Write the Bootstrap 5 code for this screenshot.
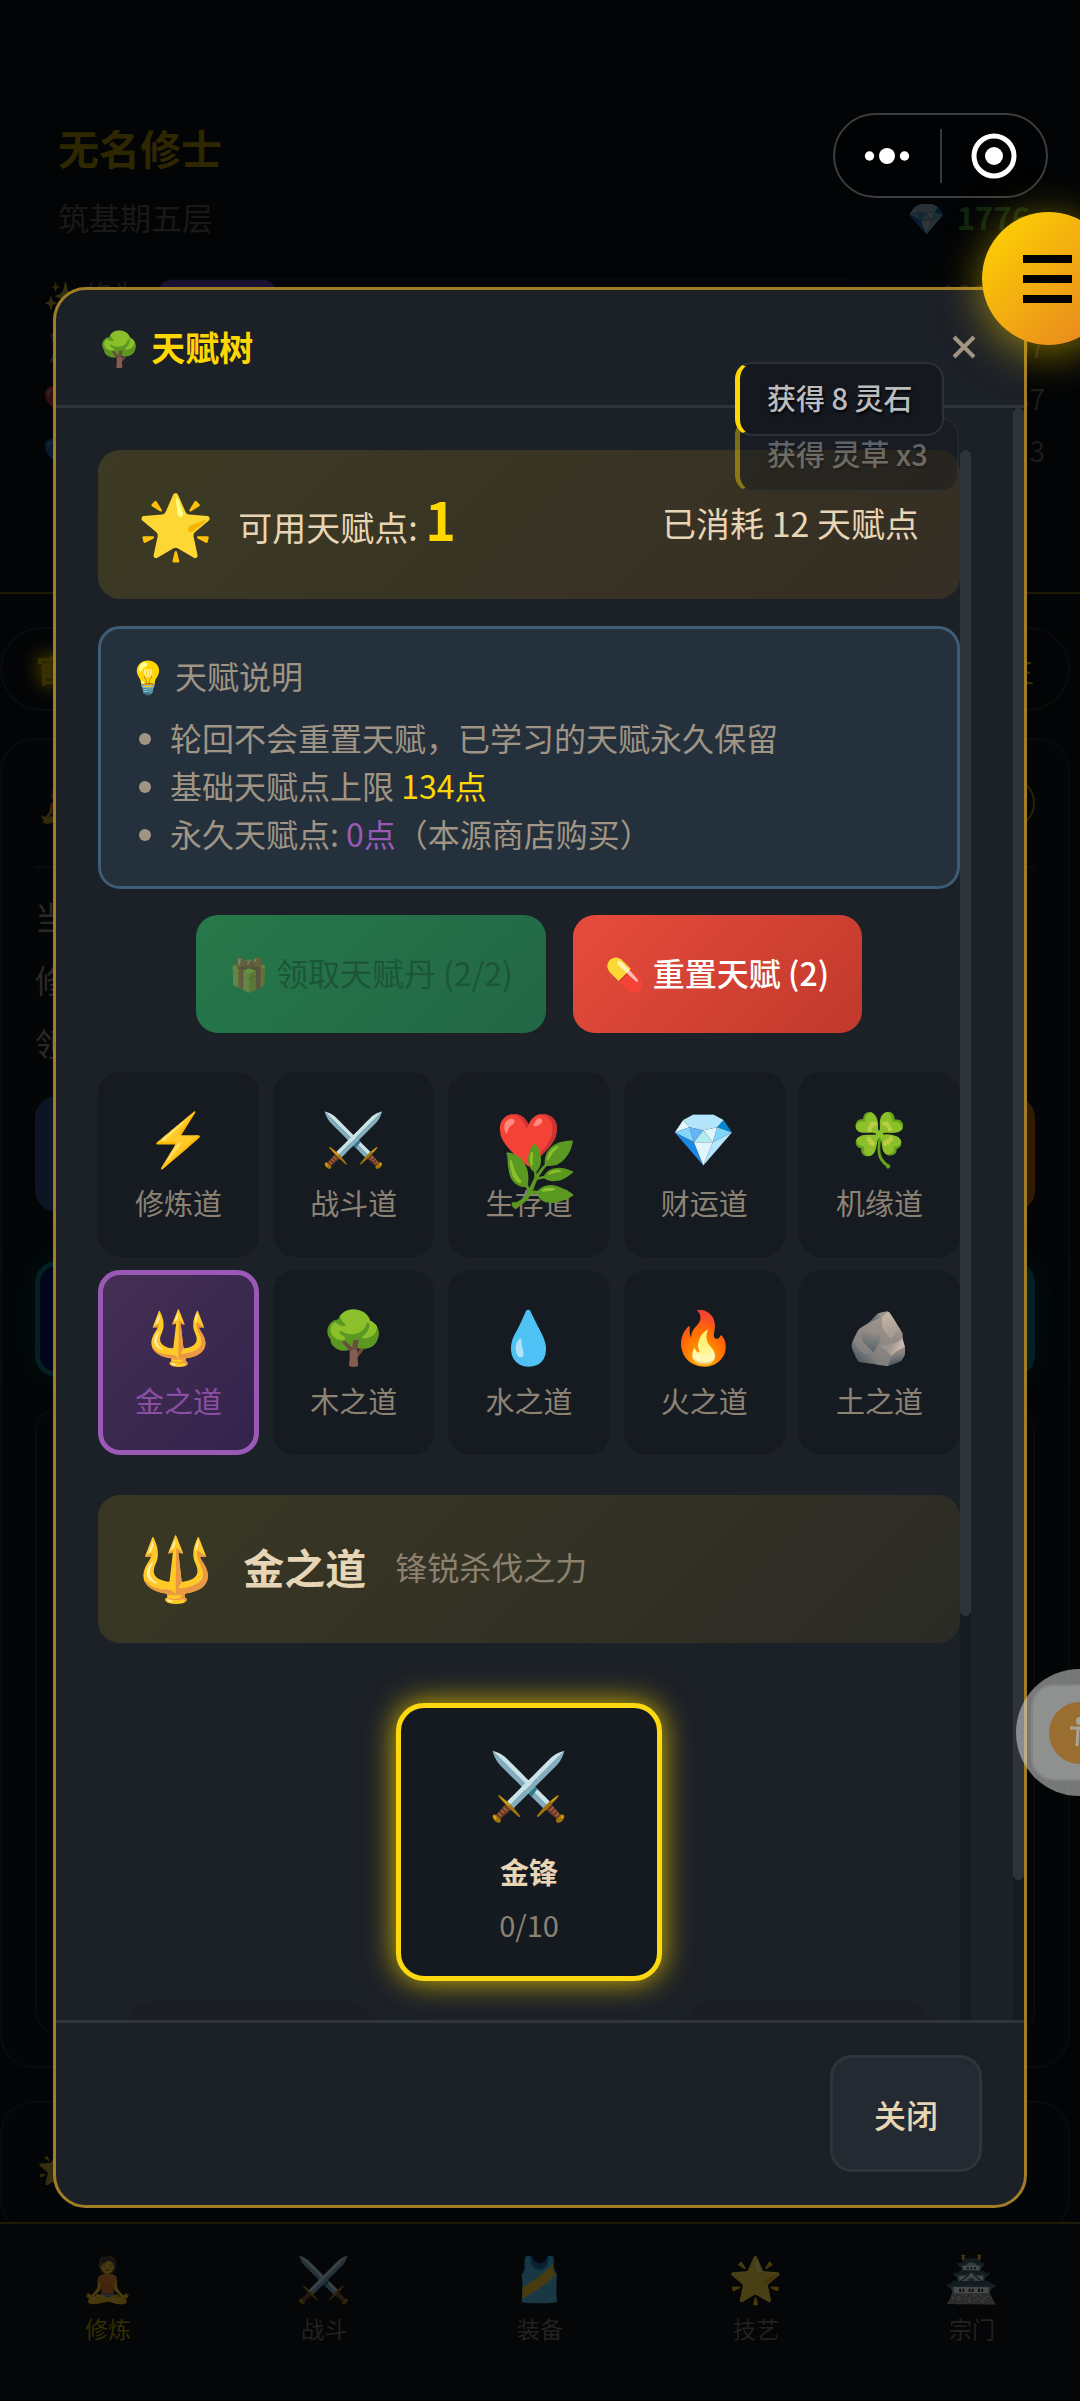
<!DOCTYPE html>
<html lang="zh-CN">
<head>
<meta charset="utf-8">
<meta name="viewport" content="width=device-width, initial-scale=1">
<title>天赋树</title>
<link href="https://cdn.jsdelivr.net/npm/bootstrap@5.3.0/dist/css/bootstrap.min.css" rel="stylesheet">
<style>
  :root { --gold: #ffd700; --ink: #e8d5b5; --muted: #968a79; --panel: #1c2027; --deep: #161b21; --line: #2f343b; }
  body { background: #020406; color: var(--ink); font-family: "Noto Sans CJK SC", "Noto Color Emoji", sans-serif; font-size: 32px; line-height: 48px; }
  button { font-family: inherit; color: inherit; }
  .game-screen { height: 100vh; position: relative; }

  /* dimmed page below the dialog */
  .hero-bar { height: 594px; padding: 117px 35px 0 43px; border-bottom: 2px solid #201a05; }
  .hero-name { font-size: 41px; line-height: 60px; color: #2f2700; padding-left: 15px; }
  .hero-sub { height: 66px; color: #1b1916; font-size: 31px; padding: 16px 15px 0; }
  .hero-gems { color: #0f2410; font-weight: 700; }
  .dim-emoji { opacity: .2; }
  .stat-list { padding-top: 25px; }
  .stat-line { height: 52px; line-height: 52px; font-size: 28px; color: #1c1b1a; }
  .stat-name { width: 113px; white-space: nowrap; }
  .stat-track { height: 32px; border: 2px solid #07080f; border-radius: 16px; }
  .stat-fill { height: 28px; border-radius: 14px; background: #1b1130; }
  .stat-num { width: 185px; text-align: right; }
  .page-area { padding: 33px 10px 0 0; flex: 1 1 0; min-height: 0; }
  .chip-row { height: 84px; border: 2px solid #0a0b0c; border-radius: 42px; padding: 0 34px; color: #3a3000; font-size: 31px; margin-bottom: 27px; }
  .chip-on { text-shadow: 0 0 20px #7a6500; font-weight: 700; }
  .dim-panel { border: 2px solid #090b0d; border-radius: 33px; background: #030506; padding: 0 33px; color: #2b2926; }
  .dim-panel-main { height: 1330px; margin-bottom: 33px; }
  .dim-head { height: 128px; padding-left: 2px; border-bottom: 2px solid #0a0c0e; }
  .dim-pill { width: 120px; height: 52px; border: 2px solid #2a2200; border-radius: 26px; }
  .dim-text { line-height: 63px; padding-top: 17px; margin-bottom: 22px; }
  .dim-act { height: 116px; border-radius: 22px; margin-bottom: 49px; background: linear-gradient(90deg, #0b1524, #331a02); }
  .dim-act-teal { border: 5px solid #042022; background: linear-gradient(90deg, #01041a, #022228); box-shadow: 0 0 30px #021416; }
  .dim-box { height: 626px; border: 2px solid #090b0d; border-radius: 22px; margin-top: -18px; }
  .tab-bar { height: 179px; border-top: 2px solid #201a08; background: #040608; padding-top: 22px; }
  .tab-link { color: #24211e; font-size: 23px; line-height: 34px; text-decoration: none; }
  .tab-link.on { color: #352d00; }
  .tab-icon { font-size: 44px; line-height: 60px; margin-bottom: 5px; opacity: .27; }

  /* dialog */
  .veil { position: absolute; inset: 0; padding: 287px 53px 0; }
  .talent-dialog { height: 80vh; border: 3px solid #a17d26; border-radius: 33px; background: var(--panel); overflow: hidden; }
  .dlg-head { height: 118px; padding: 0 42px 2px; border-bottom: 3px solid var(--line); }
  .dlg-title { font-size: 34px; line-height: 50px; font-weight: 700; color: var(--gold); gap: 11px; }
  .dlg-x { width: 36px; height: 40px; color: #a09484; }
  .dlg-foot { height: 185px; padding: 0 42px; border-top: 3px solid var(--line); }
  .foot-btn { height: 117px; padding: 0 41px; border: 3px solid #2f353d; border-radius: 22px; background: #242a32; font-weight: 500; }
  .outer-scroll { min-height: 0; }
  .outer-pane { padding: 42px 42px 0; }
  .inner-pane { min-height: 0; overflow: hidden; }
  .rail { width: 11px; flex: none; background: #161a21; }
  .rail-thumb { border-radius: 6px; background: #2f343c; }

  .points-card { height: 149px; border-radius: 22px; padding: 0 41px 4px 39px; font-size: 34px; background: linear-gradient(135deg, #3c3a24, #352e24); margin-bottom: 27px; }
  .points-left { gap: 24px; }
  .big-emoji { font-size: 62px; line-height: 86px; padding-bottom: 4px; }
  .points-value { font-size: 52px; color: var(--gold); }
  .note-card { border: 3px solid #3f5d76; border-radius: 22px; background: #24303c; color: #a09484; padding: 22px 27px 29px; margin-bottom: 26px; }
  .note-card p { margin-bottom: 14px; }
  .note-card ul { padding-left: 42px; }
  .act-btn { height: 118px; padding: 0 33px 4px; border: 0; border-radius: 22px; }
  .act-claim { background: linear-gradient(135deg, #26784a, #236746); color: #1c5539; }
  .act-claim .act-emoji { opacity: .3; }
  .act-reset { background: linear-gradient(135deg, #e74c3c, #c0392b); color: #fff; font-weight: 500; }
  .act-gap { gap: 27px; margin-bottom: 39px; }
  .path-grid { display: grid; grid-template-columns: repeat(5, 1fr); gap: 13px 14px; margin-bottom: 40px; }
  .path-btn { height: 185px; border: 5px solid var(--deep); border-radius: 22px; background: var(--deep); color: #8d8375; font-size: 29px; line-height: 43px; padding: 0; }
  .path-btn.on { border-color: #9b59b6; background: linear-gradient(135deg, #452f54, #33234c); color: #8a4fa3; }
  .path-emoji { font-size: 52px; line-height: 62px; margin-bottom: 14px; }
  .path-card { height: 148px; border-radius: 22px; padding: 0 39px 6px; background: linear-gradient(135deg, #3a3824, #2b2b26); margin-bottom: 60px; gap: 29px; }
  .path-name { font-size: 41px; line-height: 60px; }
  .path-desc { color: #8c816e; }
  .node-btn { width: 266px; height: 278px; border: 5px solid #fbd80f; border-radius: 28px; background: #151a21; box-shadow: 0 0 30px #d8b800; font-size: 29px; line-height: 44px; padding: 16px 0 0; margin-bottom: 20px; }
  .node-emoji { font-size: 65px; line-height: 52px; margin-bottom: 42px; }
  .node-rank { color: #8b8276; margin-top: 9px; }
  .next-row { padding: 0 29px; }
  .next-node { width: 246px; height: 278px; border: 0; border-radius: 28px; background: #1b1d22; }

  /* floating layers */
  .toasts { position: absolute; top: 362px; left: 735px; }
  .toast-line { height: 74px; border: 2px solid #2b3138; border-left: 5px solid var(--gold); border-radius: 17px; background: #15181f; color: #bbbcbf; font-size: 29px; font-weight: 500; line-height: 67px; padding: 0 29px 0 27px; width: max-content; text-shadow: 1px 2px 3px #000; }
  .toast-top { position: relative; z-index: 1; }
  .toast-old { opacity: .42; margin-top: -18px; }
  .herb { position: absolute; top: 1124px; left: 501px; font-size: 62px; line-height: 90px; }
  .capsule { position: absolute; top: 113px; right: 32px; width: 215px; height: 85px; border: 2px solid #3b3c3d; border-radius: 43px; background: #010203; }
  .capsule button { padding: 0; border: 0; background: none; }
  .capsule-rule { width: 2px; height: 54px; background: #38393a; }
  .menu-fab { position: absolute; top: 212px; right: -35px; width: 133px; height: 133px; border: 0; border-radius: 50%; background: linear-gradient(135deg, #ffd700, #e67e22); box-shadow: 0 8px 44px rgba(255, 215, 0, .5); padding: 0 0 0 41px; text-align: left; }
  .assist-ball { position: absolute; top: 1669px; right: -63px; width: 127px; height: 127px; border: 0; padding: 0; background: none; }
</style>
</head>
<body>
<div class="game-screen overflow-hidden d-flex flex-column">
  <header class="hero-bar flex-shrink-0">
    <h1 class="hero-name fw-bold m-0">无名修士</h1>
    <div class="hero-sub d-flex justify-content-between"><span>筑基期五层</span><span class="hero-gems"><span class="dim-emoji me-1">💎</span> 1776</span></div>
    <div class="stat-list">
      <div class="stat-line d-flex align-items-center"><span class="stat-name"><span class="dim-emoji">✨</span> 修为</span><div class="stat-track flex-grow-1"><div class="stat-fill" style="width:17%"></div></div><span class="stat-num">139/477</span></div>
      <div class="stat-line d-flex align-items-center"><span class="stat-name flex-grow-1"><span class="dim-emoji">⏳</span></span><span class="stat-num">107</span></div>
      <div class="stat-line d-flex align-items-center"><span class="stat-name flex-grow-1"><span class="dim-emoji">❤️</span></span><span class="stat-num">37</span></div>
      <div class="stat-line d-flex align-items-center"><span class="stat-name flex-grow-1"><span class="dim-emoji">💙</span></span><span class="stat-num">3</span></div>
    </div>
  </header>
  <main class="page-area overflow-hidden">
    <div class="chip-row d-flex align-items-center justify-content-between"><span class="chip-on">官</span><span>生</span></div>
    <section class="dim-panel dim-panel-main">
      <div class="dim-head d-flex align-items-center justify-content-between"><span class="dim-emoji">🧘</span><span class="dim-pill"></span></div>
      <div class="dim-text">当<br>修<br>领</div>
      <div class="dim-act"></div>
      <div class="dim-act dim-act-teal"></div>
      <div class="dim-box"></div>
    </section>
    <section class="dim-panel">
      <div class="dim-head d-flex align-items-center"><span class="dim-emoji">🌟</span></div>
    </section>
  </main>
  <nav class="tab-bar d-flex flex-shrink-0">
    <a href="#" class="tab-link on flex-fill text-center w-100"><div class="tab-icon">🧘</div>修炼</a>
    <a href="#" class="tab-link flex-fill text-center w-100"><div class="tab-icon">⚔️</div>战斗</a>
    <a href="#" class="tab-link flex-fill text-center w-100"><div class="tab-icon">🎽</div>装备</a>
    <a href="#" class="tab-link flex-fill text-center w-100"><div class="tab-icon">🌟</div>技艺</a>
    <a href="#" class="tab-link flex-fill text-center w-100"><div class="tab-icon">🏯</div>宗门</a>
  </nav>

  <div class="veil">
    <div class="talent-dialog d-flex flex-column" role="dialog" aria-labelledby="dlgTitle">
      <div class="dlg-head d-flex align-items-center justify-content-between flex-shrink-0">
        <h2 class="dlg-title d-flex m-0" id="dlgTitle"><span>🌳</span><span>天赋树</span></h2>
        <button type="button" class="dlg-x border-0 bg-transparent p-0 d-flex align-items-center justify-content-center" aria-label="关闭窗口">
          <svg width="24" height="24" viewBox="0 0 24 24" fill="none" stroke="currentColor" stroke-width="4"><path d="M2 2l20 20M22 2L2 22"/></svg>
        </button>
      </div>
      <div class="outer-scroll d-flex flex-grow-1">
        <div class="outer-pane d-flex flex-grow-1">
          <div class="inner-pane flex-grow-1">
            <div class="points-card d-flex align-items-center justify-content-between">
              <div class="points-left d-flex align-items-center">
                <span class="big-emoji">🌟</span>
                <span>可用天赋点: <b class="points-value">1</b></span>
              </div>
              <span>已消耗 12 天赋点</span>
            </div>
            <div class="note-card">
              <p>💡 天赋说明</p>
              <ul class="mb-0">
                <li>轮回不会重置天赋，已学习的天赋永久保留</li>
                <li>基础天赋点上限 <span style="color:#ffd700">134点</span></li>
                <li>永久天赋点: <span style="color:#9b59b6">0点</span>（本源商店购买）</li>
              </ul>
            </div>
            <div class="act-gap d-flex justify-content-center">
              <button type="button" class="act-btn act-claim" disabled><span class="act-emoji">🎁</span> 领取天赋丹 (2/2)</button>
              <button type="button" class="act-btn act-reset">💊 重置天赋 (2)</button>
            </div>
            <div class="path-grid">
              <button type="button" class="path-btn"><div class="path-emoji">⚡</div>修炼道</button>
              <button type="button" class="path-btn"><div class="path-emoji">⚔️</div>战斗道</button>
              <button type="button" class="path-btn"><div class="path-emoji">❤️</div>生存道</button>
              <button type="button" class="path-btn"><div class="path-emoji">💎</div>财运道</button>
              <button type="button" class="path-btn"><div class="path-emoji">🍀</div>机缘道</button>
              <button type="button" class="path-btn on"><div class="path-emoji">🔱</div>金之道</button>
              <button type="button" class="path-btn"><div class="path-emoji">🌳</div>木之道</button>
              <button type="button" class="path-btn"><div class="path-emoji">💧</div>水之道</button>
              <button type="button" class="path-btn"><div class="path-emoji">🔥</div>火之道</button>
              <button type="button" class="path-btn"><div class="path-emoji">🪨</div>土之道</button>
            </div>
            <div class="path-card d-flex align-items-center">
              <span class="big-emoji">🔱</span>
              <h3 class="path-name fw-bold m-0">金之道</h3>
              <span class="path-desc">锋锐杀伐之力</span>
            </div>
            <button type="button" class="node-btn d-block mx-auto"><div class="node-emoji">⚔️</div><div class="fw-bold">金锋</div><div class="node-rank">0/10</div></button>
            <div class="next-row d-flex justify-content-between">
              <button type="button" class="next-node" disabled aria-label="未解锁"></button>
              <button type="button" class="next-node" disabled aria-label="未解锁"></button>
            </div>
          </div>
          <div class="rail"><div class="rail-thumb" style="height:74.3%"></div></div>
        </div>
        <div class="rail"><div class="rail-thumb" style="height:91.3%"></div></div>
      </div>
      <div class="dlg-foot d-flex align-items-center justify-content-end flex-shrink-0">
        <button type="button" class="foot-btn">关闭</button>
      </div>
    </div>
  </div>

  <div class="herb">🌿</div>
  <div class="toasts">
    <div class="toast-line toast-top">获得 8 灵石</div>
    <div class="toast-line toast-old">获得 灵草 x3</div>
  </div>
  <div class="capsule d-flex align-items-center">
    <button type="button" class="flex-fill d-flex justify-content-center" aria-label="更多"><svg width="46" height="18" viewBox="0 0 46 18" fill="#fff"><circle cx="5.500" cy="9" r="4.700"/><circle cx="23" cy="9" r="8"/><circle cx="40.500" cy="9" r="4.700"/></svg></button>
    <span class="capsule-rule"></span>
    <button type="button" class="flex-fill d-flex justify-content-center" aria-label="退出"><svg width="46" height="46" viewBox="0 0 46 46"><circle cx="23" cy="23" r="20" fill="none" stroke="#fff" stroke-width="5"/><circle cx="23" cy="23" r="9" fill="#fff"/></svg></button>
  </div>
  <button type="button" class="menu-fab" aria-label="菜单"><svg class="d-block" width="49" height="48" viewBox="0 0 49 48"><path d="M0 0h49v8H0zM0 20h49v8H0zM0 40h49v8H0z"/></svg></button>
  <button type="button" class="assist-ball" aria-label="辅助功能"><svg class="d-block" width="127" height="127" viewBox="0 0 127 127"><circle cx="63.500" cy="63.500" r="63.500" fill="#d0d0d0" fill-opacity=".56"/><rect x="16" y="16" width="95" height="95" rx="22" fill="#8f9090" stroke="#838484" stroke-width="2"/><circle cx="64" cy="64" r="31" fill="#9a6d30"/><path d="M54 59h20M62 60l-1 17M67 60l1 17" fill="none" stroke="#a9a39a" stroke-width="3"/><circle cx="64" cy="52" r="4" fill="#a9a39a"/></svg></button>
</div>
<script src="https://cdn.jsdelivr.net/npm/bootstrap@5.3.0/dist/js/bootstrap.bundle.min.js"></script>
</body>
</html>
